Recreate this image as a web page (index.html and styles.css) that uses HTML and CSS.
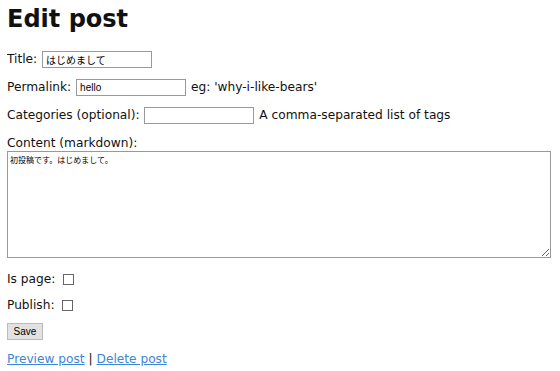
FILE: index.html
```html
<html>

<head>
    <link rel="stylesheet" href="styles.css">
</head>

<body>
    <h1 class="title">Edit post</h1>
    <form class="post-form">
        <p class="row">Title: <input class="field" type="text" value="はじめまして"></p>
        <p class="row">Permalink: <input class="field" type="text" value="hello"> eg: 'why-i-like-bears'</p>
        <p class="row">Categories (optional): <input class="field" type="text"> A comma-separated list of tags</p>
        <div class="row row-content">
            <span class="label">Content (markdown):</span>
            <textarea class="content">初投稿です。はじめまして。</textarea>
        </div>
        <p class="row row-check">Is page: <input class="check" type="checkbox"></p>
        <p class="row row-check">Publish: <input class="check" type="checkbox"></p>
        <p class="row row-save"><button class="save" type="button">Save</button></p>
    </form>
    <p class="links"><a href="#">Preview post</a> | <a href="#">Delete post</a></p>
</body>

</html>
```

FILE: styles.css
```css
body {
    margin: 0 7px;
    font-family: "DejaVu Sans", Verdana, sans-serif;
    font-size: 12.2px;
    color: #111;
}

.title {
    font-size: 24px;
    line-height: 28px;
    margin: 5px 0 18px;
}

.post-form {
    margin: 0;
}

.row {
    margin: 0 0 11px;
    line-height: 17px;
}

.row-content {
    margin-bottom: 13px;
}

.row-content .label {
    display: block;
    line-height: 16px;
}

.row-check {
    line-height: 16px;
    margin-bottom: 10px;
}

.row-save {
    margin-bottom: 11px;
}

.field {
    width: 110px;
    height: 17px;
    margin: 0 1px;
    box-sizing: border-box;
    border: 1px solid #999;
    padding: 1px 3px;
    font-family: "Liberation Sans", "Noto Sans CJK JP", sans-serif;
    font-size: 10px;
    vertical-align: middle;
}

.content {
    width: 544px;
    height: 107px;
    box-sizing: border-box;
    border: 1px solid #999;
    padding: 2px;
    font-family: "Noto Sans CJK JP", sans-serif;
    font-size: 8px;
    display: block;
}

.check {
    appearance: none;
    width: 11px;
    height: 11px;
    margin: 0 0 0 4px;
    border: 1px solid #666;
    border-radius: 0;
    background: #fff;
    vertical-align: middle;
}

.save {
    font-family: "Liberation Sans", Arial, sans-serif;
    font-size: 10px;
    width: 36px;
    height: 17px;
    padding: 0;
    border: 1px solid #bbb;
    background: #e2e2e2;
    vertical-align: middle;
}

.links {
    margin: 0;
    line-height: 16px;
}

.links a {
    color: #3d85d6;
}
```
